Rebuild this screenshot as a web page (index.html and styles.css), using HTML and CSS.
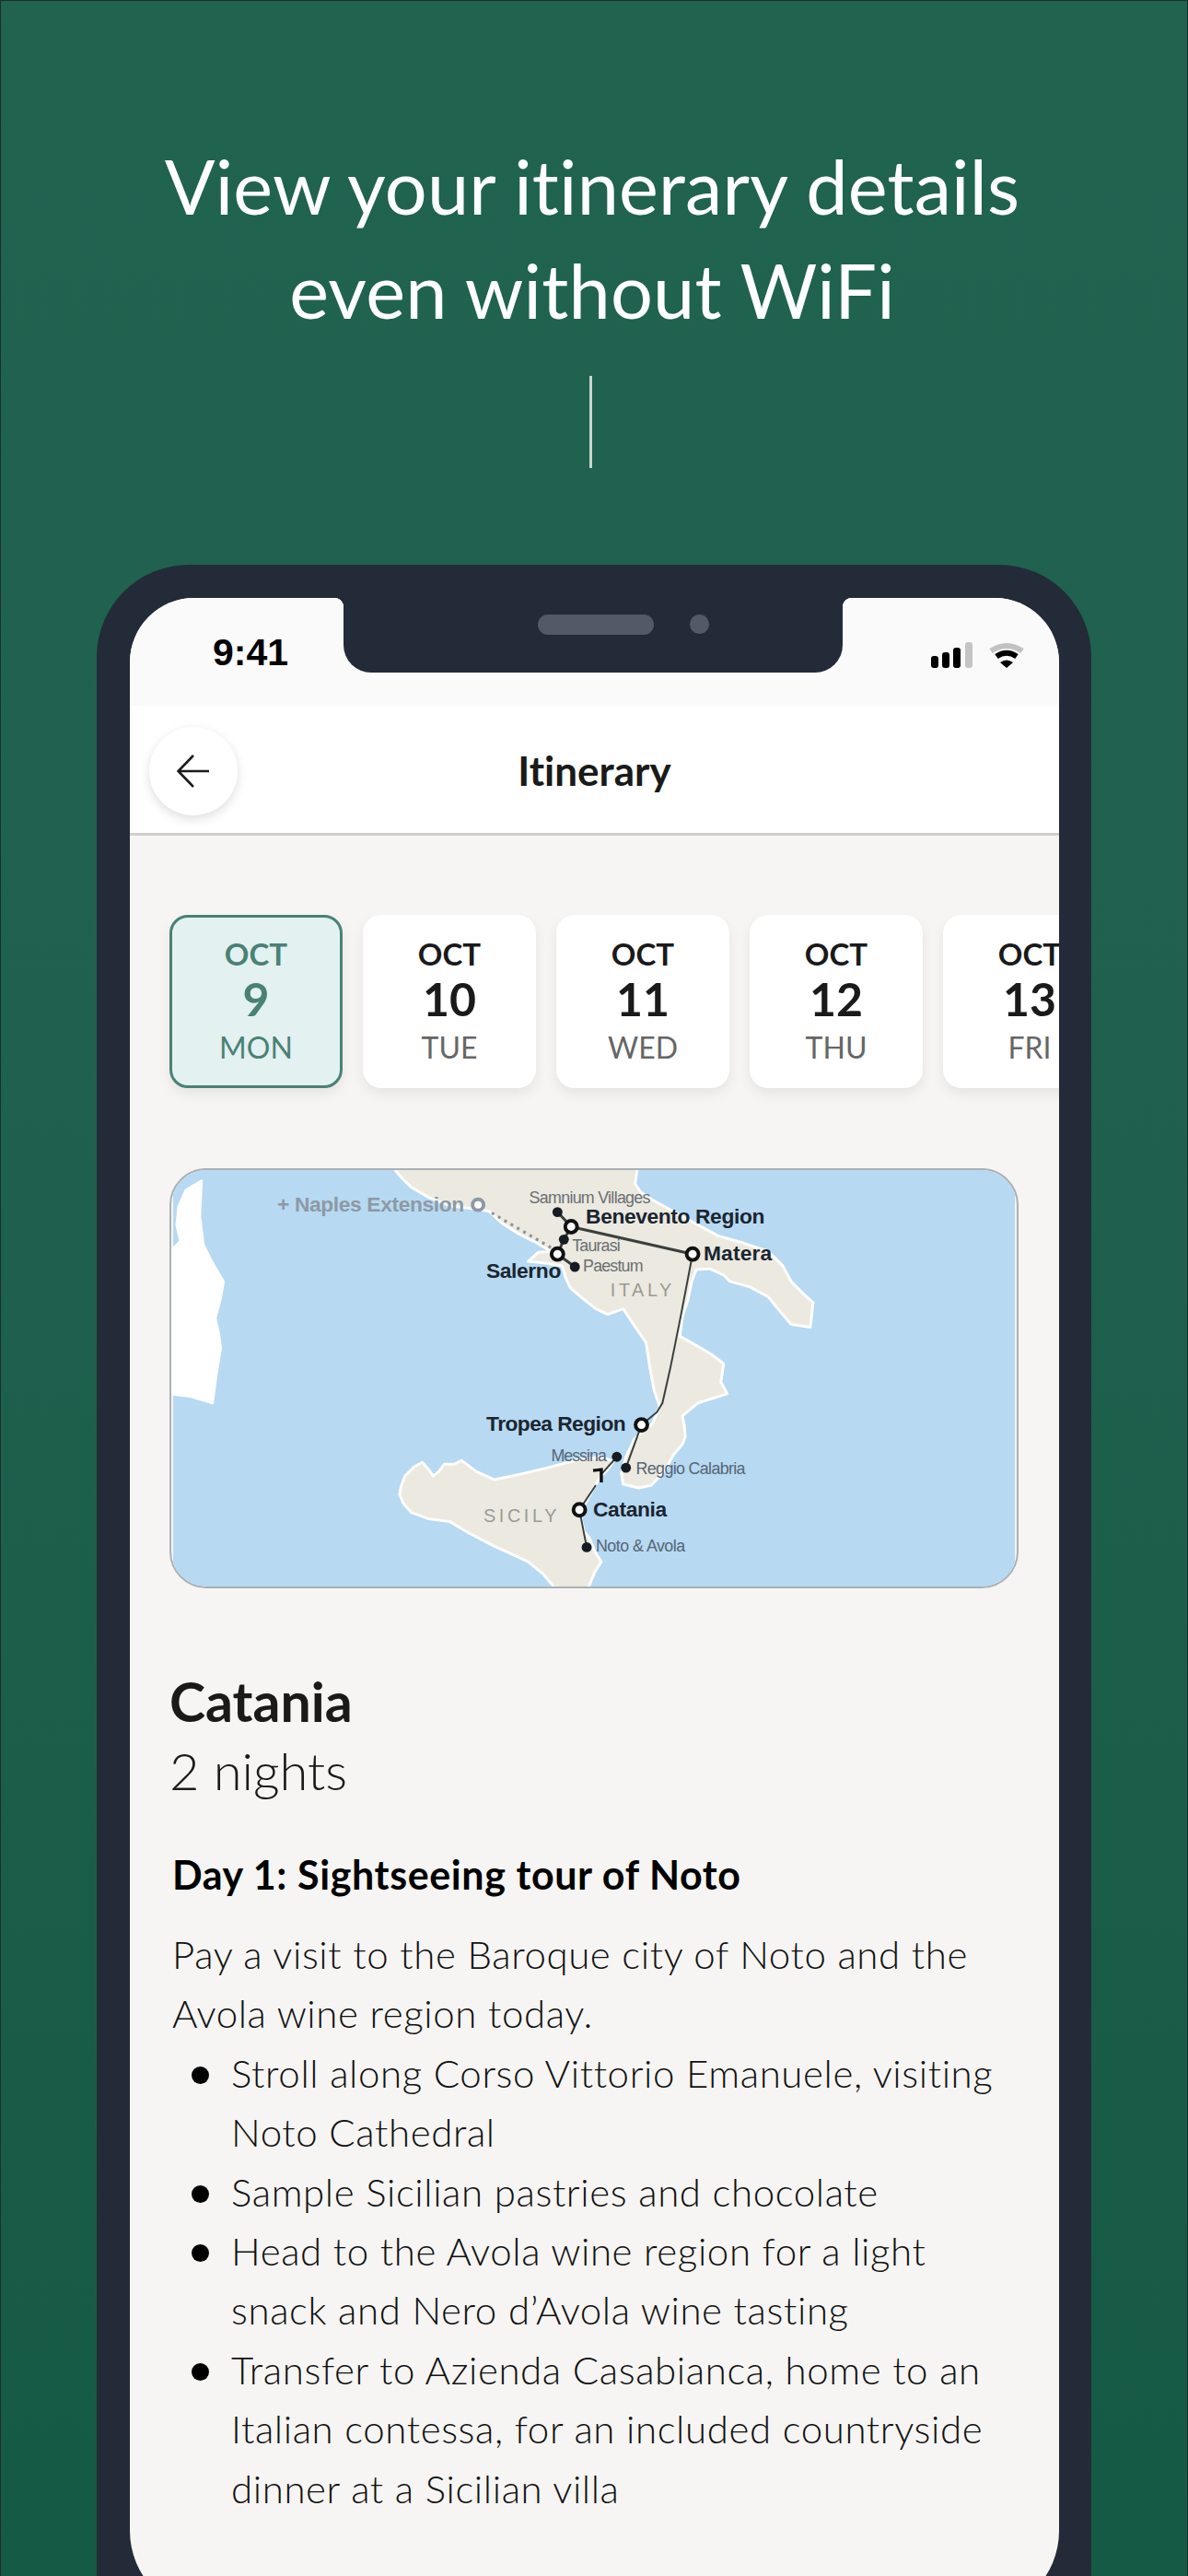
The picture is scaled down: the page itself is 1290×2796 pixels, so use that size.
FILE: index.html
```html
<!DOCTYPE html>
<html lang="en">
<head>
    <meta charset="UTF-8">
    <meta name="viewport" content="width=device-width, initial-scale=1.0">
    <title>Itinerary</title>
    <link rel="stylesheet" href="styles.css">
</head>
<body>
    <div class="page">
        <h1 class="headline">View your itinerary details<br>even without WiFi</h1>
        <div class="divider"></div>

        <div class="phone">
            <div class="screen">
                <div class="status-bar">
                    <div class="time">9:41</div>
                    <div class="notch">
                        <span class="speaker"></span>
                        <span class="camera"></span>
                    </div>
                    <div class="status-icons">
                        <svg class="signal" width="45" height="28" viewBox="0 0 45 28">
                            <rect x="0" y="15" width="8" height="13" rx="3" fill="#000"/>
                            <rect x="12" y="11" width="8" height="17" rx="3" fill="#000"/>
                            <rect x="24" y="6" width="8" height="22" rx="3" fill="#000"/>
                            <rect x="37" y="0" width="8" height="28" rx="3" fill="#c4c4c4"/>
                        </svg>
                        <svg class="wifi" width="40" height="28" viewBox="0 0 40 28">
                            <path d="M3 9.5Q20 -1.5 37 9.5" fill="none" stroke="#c2c2c2" stroke-width="6"/>
                            <path d="M9 15.5Q20 8 31 15.5" fill="none" stroke="#000" stroke-width="6"/>
                            <path d="M13 22Q20 17 27 22L20 28Z" fill="#000"/>
                        </svg>
                    </div>
                </div>

                <div class="nav">
                    <button class="back-btn" type="button">
                        <svg width="36" height="36" viewBox="0 0 36 36">
                            <path d="M35 18H2M18 1L1.5 18L18 35" fill="none" stroke="#1b1b1b" stroke-width="2.6"/>
                        </svg>
                    </button>
                    <div class="nav-title">Itinerary</div>
                </div>

                <div class="content">
                    <div class="dates">
                        <div class="date-card selected">
                            <div class="month">OCT</div>
                            <div class="num">9</div>
                            <div class="day">MON</div>
                        </div>
                        <div class="date-card">
                            <div class="month">OCT</div>
                            <div class="num">10</div>
                            <div class="day">TUE</div>
                        </div>
                        <div class="date-card">
                            <div class="month">OCT</div>
                            <div class="num">11</div>
                            <div class="day">WED</div>
                        </div>
                        <div class="date-card">
                            <div class="month">OCT</div>
                            <div class="num">12</div>
                            <div class="day">THU</div>
                        </div>
                        <div class="date-card">
                            <div class="month">OCT</div>
                            <div class="num">13</div>
                            <div class="day">FRI</div>
                        </div>
                    </div>

                    <div class="map">
                        <svg viewBox="0 0 922 456">
                            <rect width="922" height="456" fill="#b7d9f2"/>
                            <path class="land white" d="M6 40L14 22L31 12L29 50L33 82L42 100L55 122L52 140L46 162L50 180L52 195L47 225L43 255L20 248L-4 245L-4 90L8 78L4 60Z"/>
                            <path class="land" d="M240 -4L250 8L261 19L280 30L303 39L325 42L346 45L360 58L377 69L395 78L414 89L400 90L389 100L408 102L426 105L430 118L435 129L448 140L463 152L476 158L493 152L505 170L518 189L522 215L527 242L533 259L525 278L515 285L505 295L496 314L491 332L493 344L510 348L524 345L538 330L548 312L558 300L561 292L560 280L558 269L575 255L607 245L600 232L603 212L590 202L573 192L555 182L558 160L564 142L568 122L573 109L588 108L603 115L610 122L632 128L652 139L665 155L677 169L698 172L701 145L690 135L677 122L668 105L652 89L625 80L597 72L560 52L524 32L512 24L506 15L509 -4Z"/>
                            <path class="land" d="M273 320L280 328L285 335L291 330L297 322L308 322L316 318L332 330L352 339L380 333L414 325L440 318L469 314L482 319L476 328L469 335L462 346L457 355L450 368L447 382L450 395L457 405L462 418L469 429L462 440L457 452L454 460L420 460L405 442L389 429L370 420L352 412L325 398L303 385L280 382L261 375L252 365L248 355L250 345L254 335L264 325Z"/>

                            <path class="dots" d="M349 47L414 85"/>
                            <path class="route" d="M421 46L436 62L428 76L421 92L440 106"/>
                            <path class="route" d="M436 62L569 92"/>
                            <path class="route thin" d="M569 92L556 160L545 215L536 255L530 265L513 279L496 326"/>
                            <path class="route thin" d="M486 314L470 332"/>
                            <path class="route thin" d="M463 345L445 372L453 413"/>
                            <path d="M460 329L469 328L469 342" fill="none" stroke="#111" stroke-width="3.5"/>

                            <circle class="stop" cx="421" cy="46" r="5.5"/>
                            <circle class="stop" cx="428" cy="76" r="5.5"/>
                            <circle class="stop" cx="440" cy="106" r="5.5"/>
                            <circle class="stop" cx="486" cy="314" r="5.5"/>
                            <circle class="stop" cx="496" cy="326" r="5.5"/>
                            <circle class="stop" cx="453" cy="413" r="5.5"/>
                            <circle class="hub" cx="436" cy="62" r="6.5"/>
                            <circle class="hub" cx="421" cy="92" r="6.5"/>
                            <circle class="hub" cx="569" cy="92" r="6.5"/>
                            <circle class="hub" cx="513" cy="279" r="6.5"/>
                            <circle class="hub" cx="445" cy="372" r="6.5"/>
                            <circle class="hub grey" cx="334" cy="38" r="6"/>

                            <text class="place ext" x="114" y="45" textLength="205">+ Naples Extension</text>
                            <text class="small" x="390" y="36" textLength="133">Samnium Villages</text>
                            <text class="place" x="452" y="59" textLength="196">Benevento Region</text>
                            <text class="small" x="437" y="89" textLength="53">Taurasi</text>
                            <text class="place" x="581" y="99" textLength="75">Matera</text>
                            <text class="place" x="343" y="118" textLength="82">Salerno</text>
                            <text class="small" x="449" y="111" textLength="66">Paestum</text>
                            <text class="region" x="479" y="138" textLength="67">ITALY</text>
                            <text class="place" x="343" y="285" textLength="153">Tropea Region</text>
                            <text class="small blue" x="414" y="319" textLength="61">Messina</text>
                            <text class="small blue" x="507" y="333" textLength="120">Reggio Calabria</text>
                            <text class="region" x="340" y="385" textLength="80">SICILY</text>
                            <text class="place" x="460" y="379" textLength="81">Catania</text>
                            <text class="small blue" x="463" y="418" textLength="98">Noto &amp; Avola</text>
                        </svg>
                    </div>

                    <h2 class="city">Catania</h2>
                    <div class="nights">2 nights</div>

                    <div class="details">
                        <h3 class="day-title">Day 1: Sightseeing tour of Noto</h3>
                        <p class="day-text">Pay a visit to the Baroque city of Noto and the Avola wine region today.</p>
                        <ul class="day-list">
                            <li>Stroll along Corso Vittorio Emanuele, visiting Noto Cathedral</li>
                            <li>Sample Sicilian pastries and chocolate</li>
                            <li>Head to the Avola wine region for a light snack and Nero d’Avola wine tasting</li>
                            <li>Transfer to Azienda Casabianca, home to an Italian contessa, for an included countryside dinner at a Sicilian villa</li>
                        </ul>
                    </div>
                </div>
            </div>
        </div>
    </div>
</body>
</html>
```

FILE: styles.css
```css
html, body {
    margin: 0;
    height: 2796px;
    overflow: hidden;
}
body {
    font-family: "Lato", "Liberation Sans", sans-serif;
    font-variant-ligatures: none;
    color: #1a1a1a;
}
.page {
    height: 2796px;
    box-sizing: border-box;
    border: 1px solid #1d2f2c;
    border-bottom: none;
    background: linear-gradient(#20634f, #1f614e 40%, #155a44);
    display: flex;
    flex-direction: column;
    align-items: center;
    overflow: hidden;
}
.headline {
    margin: 144px 4px 0 0;
    font-size: 81px;
    line-height: 113px;
    font-weight: 400;
    letter-spacing: 0.2px;
    color: #fff;
    text-align: center;
}
.divider {
    width: 3px;
    height: 100px;
    margin: 37px 8px 0 0;
    background: #c9d6d0;
    flex-shrink: 0;
}

/* phone frame */
.phone {
    margin-top: 105px;
    width: 1080px;
    height: 2300px;
    flex-shrink: 0;
    box-sizing: border-box;
    padding: 36px 35px 0 36px;
    background: #232b38;
    border-radius: 100px 100px 0 0;
}
.screen {
    height: 2188px;
    border-radius: 70px 70px 90px 90px;
    background: #f6f5f3;
    overflow: hidden;
}
.status-bar {
    height: 117px;
    background: #fafafa;
    display: flex;
    align-items: flex-start;
}
.time {
    width: 232px;
    padding: 36px 0 0 90px;
    box-sizing: border-box;
    font-family: "Liberation Sans", sans-serif;
    font-size: 41px;
    font-weight: 700;
    line-height: 46px;
    color: #000;
}
.notch {
    position: relative;
    width: 542px;
    height: 81px;
    box-sizing: border-box;
    padding: 18px 0 0 65px;
    background: #232b38;
    border-radius: 0 0 30px 30px;
    display: flex;
    justify-content: center;
    gap: 39px;
}
.notch::before,
.notch::after {
    content: "";
    position: absolute;
    top: 0;
    width: 10px;
    height: 10px;
}
.notch::before {
    left: -10px;
    background: radial-gradient(circle at 0 100%, transparent 10px, #232b38 10.5px);
}
.notch::after {
    right: -10px;
    background: radial-gradient(circle at 100% 100%, transparent 10px, #232b38 10.5px);
}
.speaker {
    width: 126px;
    height: 22px;
    border-radius: 11px;
    background: #525a67;
}
.camera {
    width: 21px;
    height: 21px;
    border-radius: 50%;
    background: #525a67;
}
.status-icons {
    padding: 48px 0 0 96px;
    display: flex;
    gap: 17px;
}

/* nav bar */
.nav {
    height: 138px;
    background: #fff;
    border-bottom: 3px solid #cfcfcf;
    display: grid;
    grid-template-columns: 1fr auto 1fr;
    align-items: center;
}
.back-btn {
    width: 96px;
    height: 96px;
    margin: 4px 0 0 21px;
    padding: 0;
    border: none;
    border-radius: 50%;
    background: #fff;
    box-shadow: 0 4px 12px rgba(0, 0, 0, 0.13);
    display: flex;
    align-items: center;
    justify-content: center;
}
.nav-title {
    font-size: 44px;
    font-weight: 700;
    line-height: 50px;
    padding-top: 2px;
}

/* date picker */
.content {
    padding-top: 86px;
}
.dates {
    display: flex;
    gap: 22px;
    padding-left: 43px;
    padding-bottom: 20px;
    overflow: hidden;
}
.date-card {
    width: 188px;
    height: 188px;
    flex-shrink: 0;
    box-sizing: border-box;
    padding-top: 22px;
    border-radius: 20px;
    background: #fff;
    box-shadow: 0 6px 14px rgba(0, 0, 0, 0.07);
    text-align: center;
}
.date-card.selected {
    border: 3px solid #4a8175;
    padding-top: 19px;
    background: #e3f1f0;
    color: #4a8175;
}
.month {
    font-size: 33px;
    font-weight: 700;
    line-height: 40px;
}
.num {
    font-size: 50px;
    font-weight: 700;
    line-height: 59px;
}
.day {
    font-size: 32px;
    line-height: 46px;
    color: #666;
}
.selected .day {
    color: #4a8175;
}

/* map */
.map {
    width: 922px;
    height: 456px;
    margin: 67px 0 0 43px;
    box-sizing: border-box;
    border: 2px solid #a9b1b5;
    border-radius: 40px;
    overflow: hidden;
}
.map svg {
    display: block;
    width: 100%;
    height: 100%;
}
.land {
    fill: #ebe9e0;
    stroke: #fff;
    stroke-width: 3;
    stroke-linejoin: round;
}
.land.white {
    fill: #fff;
}
.route {
    fill: none;
    stroke: #3a3f3c;
    stroke-width: 3;
}
.route.thin {
    stroke-width: 2;
}
.dots {
    fill: none;
    stroke: #8d9294;
    stroke-width: 3;
    stroke-dasharray: 3 5;
}
.stop {
    fill: #161c22;
}
.hub {
    fill: #fff;
    stroke: #111;
    stroke-width: 4;
}
.hub.grey {
    stroke: #8d99a5;
}
.map text {
    font-family: "Liberation Sans", sans-serif;
}
.place {
    font-size: 23px;
    font-weight: 700;
    fill: #1a2530;
}
.place.ext {
    fill: #8d99a5;
}
.small {
    font-size: 18px;
    fill: #6b6f72;
}
.small.blue {
    fill: #566675;
}
.region {
    font-size: 20px;
    fill: #9b9b92;
}

/* text */
.city {
    margin: 85px 0 0 43px;
    font-size: 59px;
    font-weight: 700;
    line-height: 75px;
}
.nights {
    margin-left: 43px;
    font-size: 56px;
    font-weight: 300;
    line-height: 75px;
}
.details {
    margin: 44px 0 0 46px;
    width: 900px;
}
.day-title {
    margin: 0 0 22px;
    font-size: 43px;
    font-weight: 700;
    letter-spacing: 0.6px;
    line-height: 64px;
    color: #000;
}
.day-text {
    margin: 0;
    font-size: 42px;
    font-weight: 300;
    letter-spacing: 0.6px;
    line-height: 64.4px;
    color: #111;
}
.day-list {
    margin: 0;
    padding: 0 0 0 64px;
    list-style: none;
    font-size: 42px;
    font-weight: 300;
    letter-spacing: 0.6px;
    line-height: 64.4px;
    color: #111;
}
.day-list li {
    position: relative;
}
.day-list li::before {
    content: "";
    position: absolute;
    left: -43px;
    top: 25px;
    width: 19px;
    height: 19px;
    border-radius: 50%;
    background: #000;
}
```
